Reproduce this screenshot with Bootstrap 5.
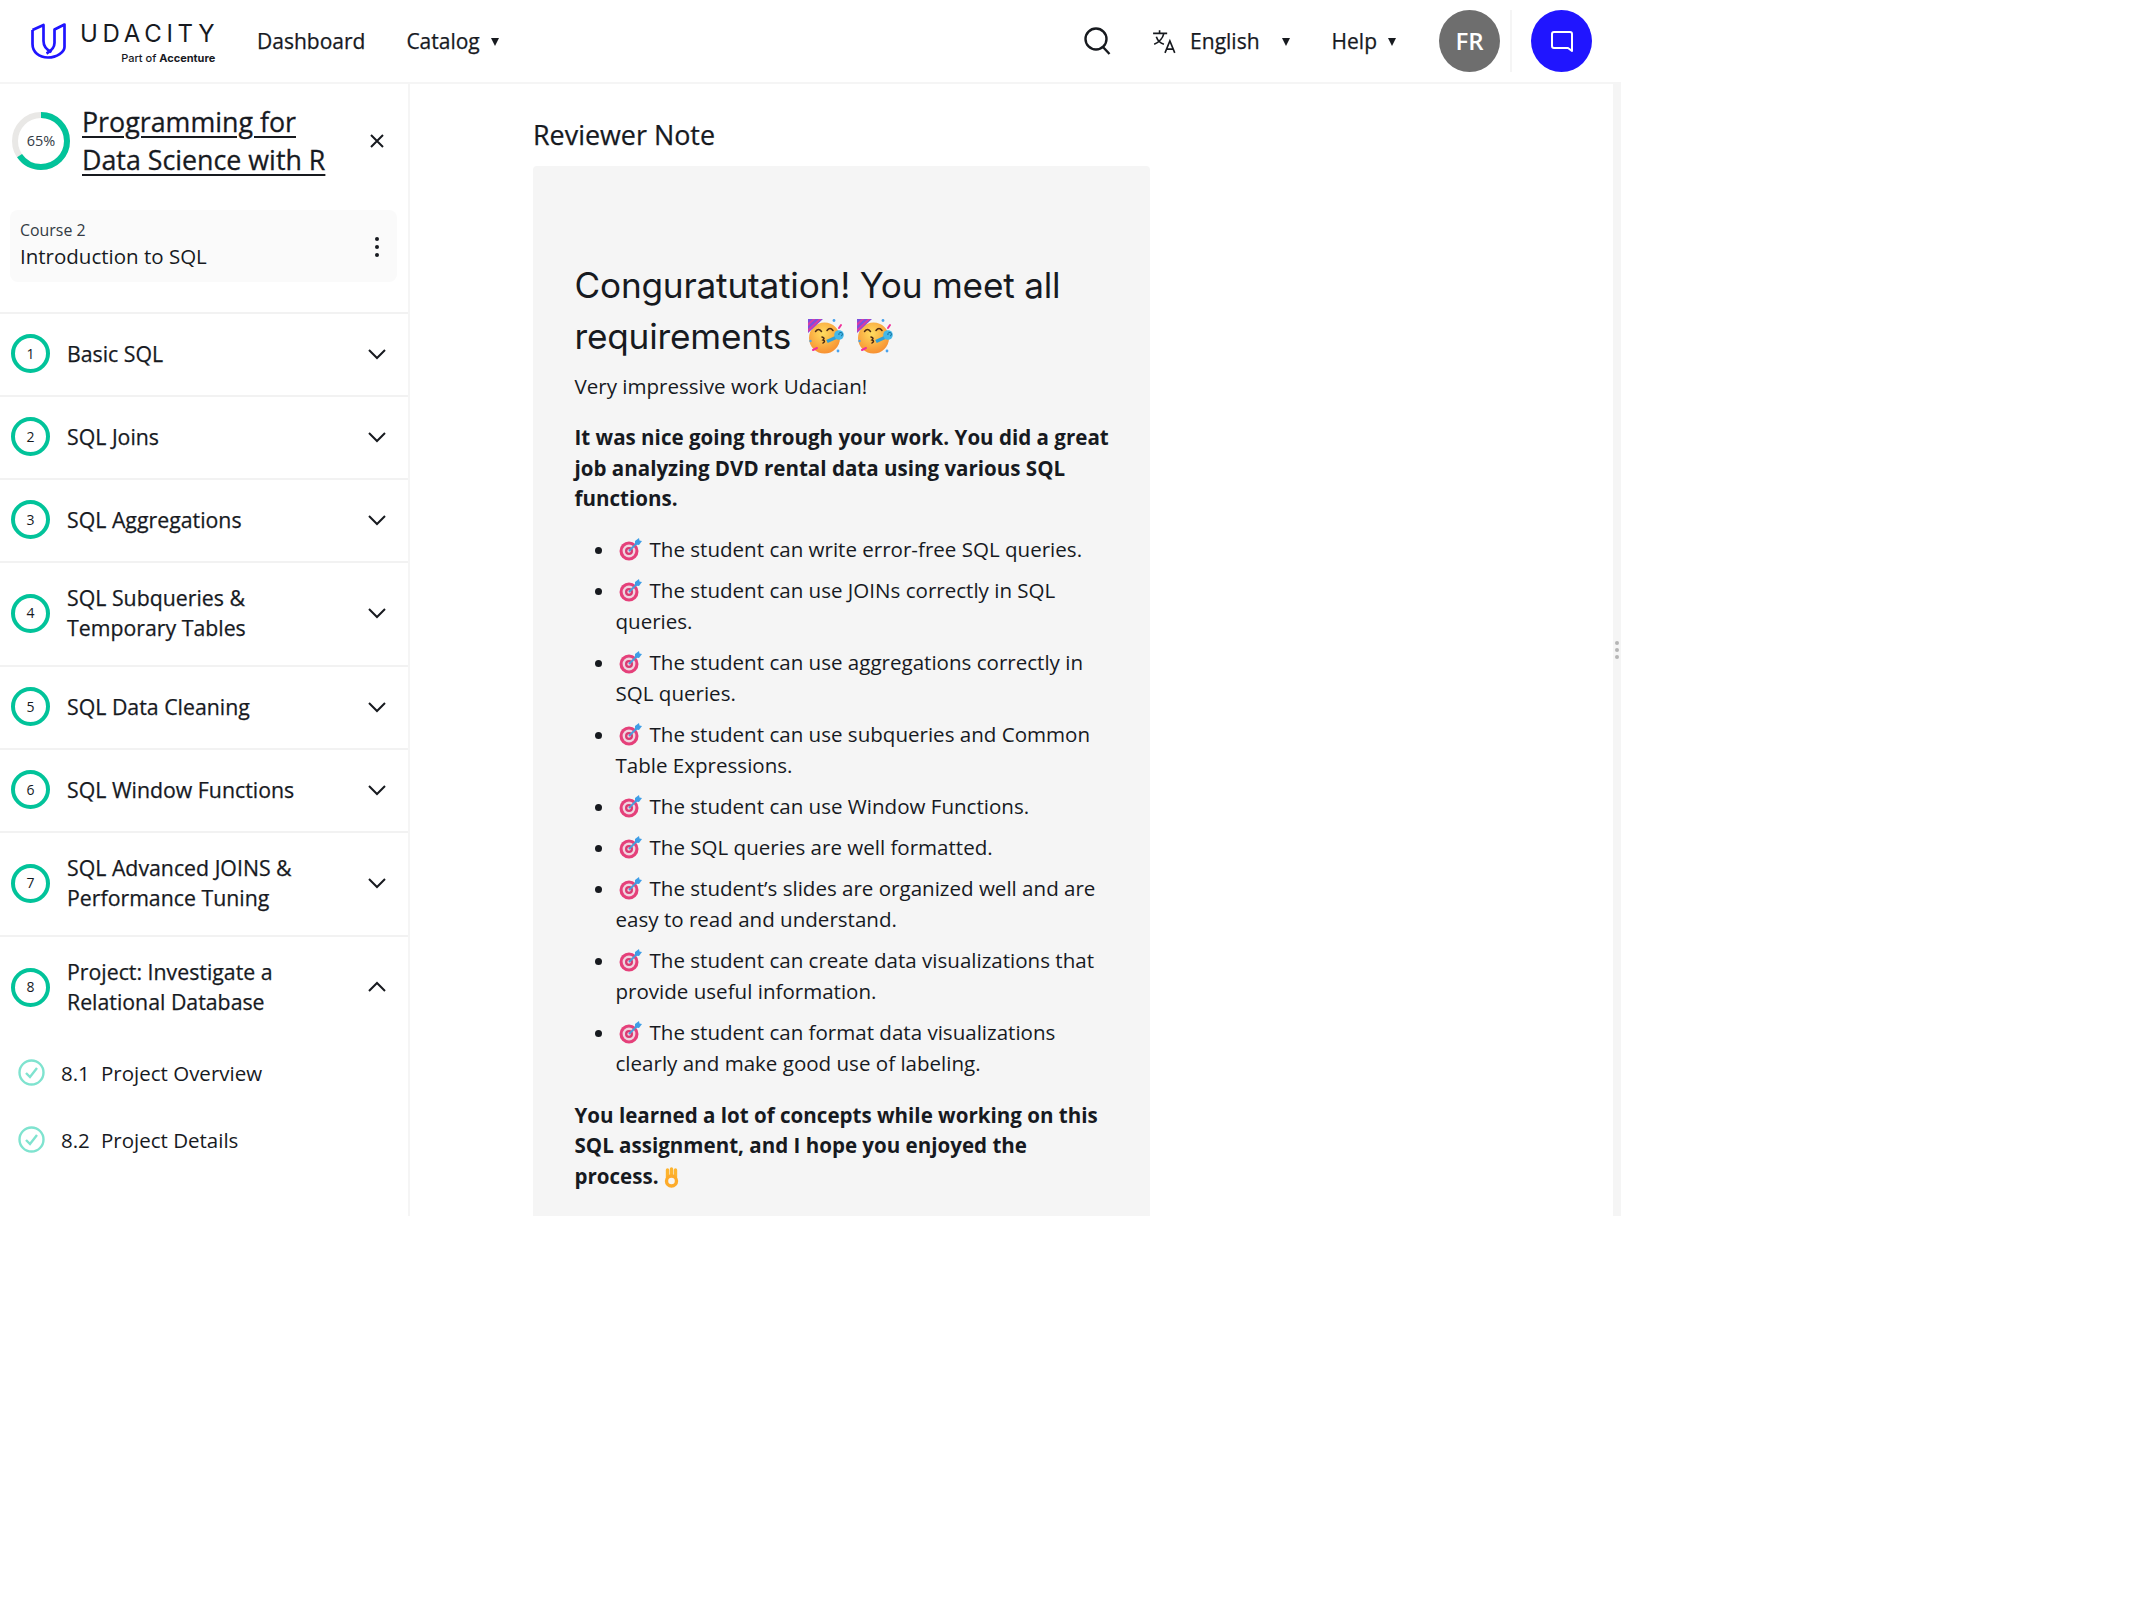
<!DOCTYPE html>
<html lang="en">
<head>
    <meta charset="utf-8">
    <title>Project Details</title>
    <link href="https://cdn.jsdelivr.net/npm/bootstrap@5.3.2/dist/css/bootstrap.min.css" rel="stylesheet">
    <style>
        body { font-family: "Open Sans", "Liberation Sans", sans-serif; color: #171a1f; background: #fff; }
        .app-shell { width: 1621px; height: 1216px; overflow: hidden; }

        /* top bar */
        .top-bar { height: 84px; padding: 0; border-bottom: 2px solid #f5f5f5; background: #fff; flex-wrap: nowrap; }
        .brand-link { width: 233px; padding-left: 31px; color: #171a1f; text-decoration: none; }
        .brand-logo { margin-right: 13px; }
        .brand-name { font-family: Inter, sans-serif; font-size: 24px; line-height: 24px; letter-spacing: 4.7px; font-weight: 400; margin: 3px -4px 0 0; }
        .brand-sub { font-family: Inter, sans-serif; font-size: 11px; line-height: 12px; text-align: right; margin-top: 6px; font-weight: 500; }
        .top-link { font-size: 21px; line-height: 30px; font-weight: 500; color: #171a1f; text-decoration: none; -webkit-text-stroke: .25px #171a1f; }
        .top-link.dropdown-toggle::after { border-top: 8px solid #171a1f; border-left: 4.5px solid transparent; border-right: 4.5px solid transparent; border-bottom: 0; vertical-align: 3px; }
        .catalog-link { margin-left: 41px; }
        .catalog-link::after { margin-left: 11px; }
        .lang-link::after { margin-left: 22px; }
        .help-link { margin-left: 42px; }
        .help-link::after { margin-left: 11px; }
        .search-mark { margin-right: 41px; }
        .round-btn { width: 61px; height: 62px; border-radius: 50%; border: 0; color: #fff; padding: 0; }
        .avatar-btn { background: #6e6e6e; font-size: 24px; font-weight: 600; margin-left: 43px; }
        .chat-btn { background: #2015ff; margin-right: 29px; }
        .bar-divider { width: 2px; height: 62px; background: #f5f5f5; margin: 0 19px 0 10px; }

        /* sidebar */
        .side-panel { width: 410px; flex: none; border-right: 2px solid #f5f5f5; }
        .course-head { padding: 0 23px 0 12px; height: 114px; margin-bottom: 12px; }
        .course-title { font-size: 26.8px; line-height: 38px; font-weight: 500; color: #171a1f; margin-left: 12px; width: 270px; text-decoration: underline; text-underline-offset: 4px; -webkit-text-stroke: .3px #171a1f; }
        .course-box { margin: 0 11px 0 10px; height: 72px; background: #fafafa; border-radius: 8px; padding: 10px 14px 0 10px; }
        .course-no { font-size: 15.9px; line-height: 20px; color: #333a44; }
        .course-name { font-size: 20.5px; line-height: 32px; }
        .more-dot { width: 4px; height: 4px; border-radius: 50%; background: #171a1f; }
        .module-list { margin-top: 30px; }
        .module-list .module-row { display: flex; align-items: center; padding: 0 21px 2px 11px; border-style: solid; border-color: #f2f2f2; border-width: 2px 0 0; border-radius: 0; height: 83px; color: #171a1f; font-size: 21.3px; line-height: 30px; font-weight: 500; -webkit-text-stroke: .25px #171a1f; }
        .module-list .module-row.tall { height: 104px; }
        .step-ring { width: 39px; height: 39px; flex: none; border: 4.5px solid #02c39a; border-radius: 50%; display: flex; align-items: center; justify-content: center; font-size: 14px; font-weight: 500; margin-right: 17px; -webkit-text-stroke: 0; }
        .module-name { flex-grow: 1; }
        .lesson-row { display: flex; align-items: center; height: 67px; padding-left: 18px; font-size: 20.5px; line-height: 30px; }
        .lesson-no { margin: 0 12px 0 16px; width: 28px; flex: none; }

        /* review */
        .review-pane { flex-grow: 1; padding: 31px 0 0 123px; display: flex; flex-direction: column; }
        .review-label { font-size: 26.9px; line-height: 40px; font-weight: 500; margin: 0 0 11px; -webkit-text-stroke: .25px #171a1f; }
        .review-box { width: 617px; flex-grow: 1; background: #f5f5f5; border-radius: 4px 4px 0 0; padding: 94px 38px 0 41.5px; font-size: 20.55px; line-height: 30.8px; }
        .review-box h2 { font-family: Inter, sans-serif; font-size: 35.2px; line-height: 51px; font-weight: 400; margin: 0 0 9px; letter-spacing: -.2px; }
        .review-box p { margin-bottom: 20px; }
        .review-box ul { padding-left: 41px; margin-bottom: 21px; }
        .review-box li { margin-bottom: 10.3px; }
        .emo-big { width: 37px; height: 36px; vertical-align: -6px; margin-left: 7px; }
        .emo-big.emo-next { margin-left: 2px; }
        .emo-target { width: 23px; height: 23px; vertical-align: -4px; margin: 0 8px 0 3px; }
        .emo-ok { width: 15px; height: 21px; vertical-align: -4px; }
        .side-strip { width: 8px; flex: none; background: #f5f5f5; gap: 3px; }
        .grip-dot { width: 4px; height: 4px; border-radius: 50%; background: #b5b5b5; }
    </style>
</head>
<body>
    <svg width="0" height="0" class="d-block">
        <defs>
            <radialGradient id="faceFill" cx="45%" cy="35%" r="70%">
                <stop offset="0" stop-color="#ffdc5e"/>
                <stop offset="1" stop-color="#f78b2e"/>
            </radialGradient>
            <symbol id="partyFace" viewBox="0 0 37 36">
                <circle cx="16.500" cy="19" r="15.500" fill="url(#faceFill)"/>
                <path d="M0 0h15L0 14z" fill="#7b4fdc"/>
                <path d="M0 4L5 0h2.500L0 7zM0 10L11 0h2.500L0 13z" fill="#d83aa8"/>
                <path d="M7.500 12.500q3-4 6 0M19 11.500q3-4 6 0" fill="none" stroke="#4e2b12" stroke-width="1.500" stroke-linecap="round"/>
                <path d="M14 18q3.500 1 1 3 3 1 0 3" fill="none" stroke="#4e2b12" stroke-width="1.500" stroke-linecap="round"/>
                <path d="M19 22.500l11-5" stroke="#2f9fd8" stroke-width="3.500"/>
                <circle cx="31" cy="16" r="4.800" fill="#45b8e8"/>
                <path d="M31 16a1.800 1.800 0 1 1 2 1" fill="none" stroke="#17709e" stroke-width="1"/>
                <path d="M31 9l2-3" stroke="#f0309a" stroke-width="2" stroke-linecap="round"/>
                <path d="M5 31l4-2" stroke="#f0309a" stroke-width="2" stroke-linecap="round"/>
                <circle cx="26" cy="1.500" r="1.400" fill="#4aa3ee"/><circle cx="30" cy="32" r="1.400" fill="#4aa3ee"/><circle cx="2.500" cy="22" r="1.200" fill="#4aa3ee"/>
            </symbol>
            <symbol id="targetMark" viewBox="0 0 23 23">
                <circle cx="10" cy="13" r="9.500" fill="#e5407a"/>
                <circle cx="10" cy="13" r="6.400" fill="#f0d5e0"/>
                <circle cx="10" cy="13" r="4" fill="#d93a72"/>
                <circle cx="10" cy="13" r="1.700" fill="#f0d5e0"/>
                <path d="M10 13L20 3" stroke="#4b9bd8" stroke-width="1.800"/>
                <path d="M16 3l4-3 .5 2.500L23 3l-3 4-4-.5z" fill="#3f9ee6"/>
            </symbol>
            <symbol id="okHand" viewBox="0 0 15 21">
                <path d="M3.500 3v7M7.500 2v6M11.500 3v7" stroke="#fdb42e" stroke-width="3.400" stroke-linecap="round"/>
                <circle cx="7.500" cy="14" r="5" fill="#f5f5f5" stroke="#fdab2a" stroke-width="3.400"/>
            </symbol>
            <symbol id="chevDown" viewBox="0 0 20 12">
                <path d="M2 2l8 8 8-8" fill="none" stroke="#171a1f" stroke-width="2"/>
            </symbol>
            <symbol id="doneMark" viewBox="0 0 27 27">
                <circle cx="13.500" cy="13.500" r="12" fill="none" stroke="#7fe3cf" stroke-width="2.400"/>
                <path d="M8 14l4 4 7-9" fill="none" stroke="#7fe3cf" stroke-width="2.400"/>
            </symbol>
        </defs>
    </svg>

    <div class="app-shell d-flex flex-column">
        <nav class="navbar top-bar">
            <a class="brand-link d-flex align-items-center" href="#">
                <svg width="36" height="36" viewBox="0 0 36 36" class="flex-shrink-0 brand-logo" fill="none" stroke="#2015ff" stroke-width="2.700" stroke-linejoin="round">
                    <path d="M1.500 7L12.500 2V18C12.500 23 16 27 20.500 29"/>
                    <path d="M1.500 7V21C1.500 29 8 34.500 17 34.500C26 34.500 33.500 29 33.500 24V1.500L23.500 6.500V20C23.500 25 20 28 15.500 30.500"/>
                </svg>
                <div>
                    <div class="brand-name">UDACITY</div>
                    <div class="brand-sub">Part of <b>Accenture</b></div>
                </div>
            </a>
            <a class="top-link ms-4" href="#">Dashboard</a>
            <a class="top-link catalog-link dropdown-toggle" href="#">Catalog</a>
            <div class="ms-auto d-flex align-items-center">
                <svg width="27" height="28" viewBox="0 0 27 28" fill="none" stroke="#171a1f" stroke-width="2.400" class="search-mark">
                    <circle cx="12" cy="12" r="10.500"/><path d="M19 20l6.500 7"/>
                </svg>
                <svg width="26" height="26" viewBox="0 0 24 24" fill="none" stroke="#171a1f" stroke-width="1.500" class="me-2">
                    <path d="M1 5h13M7 2v3M11 5c-1 4-4 8-9 10M4 8c1 3 4 6 7 7M12 23l4.500-11L21 23M13.500 19.500h6"/>
                </svg>
                <a class="top-link lang-link dropdown-toggle ms-1" href="#">English</a>
                <a class="top-link help-link dropdown-toggle" href="#">Help</a>
                <button class="round-btn avatar-btn" type="button">FR</button>
                <span class="bar-divider"></span>
                <button class="round-btn chat-btn" type="button">
                    <svg width="24" height="24" viewBox="0 0 24 24" fill="none" stroke="#fff" stroke-width="2" stroke-linejoin="round">
                        <path d="M4 2h16a2 2 0 0 1 2 2v17l-4-3H4a2 2 0 0 1-2-2V4a2 2 0 0 1 2-2z"/>
                    </svg>
                </button>
            </div>
        </nav>

        <div class="d-flex flex-grow-1 overflow-hidden">
            <aside class="side-panel">
                <div class="course-head d-flex align-items-center">
                    <svg width="58" height="58" viewBox="0 0 58 58" class="flex-shrink-0">
                        <circle cx="29" cy="29" r="26" fill="none" stroke="#e9e8e6" stroke-width="6"/>
                        <circle cx="29" cy="29" r="26" fill="none" stroke="#02c39a" stroke-width="6" stroke-dasharray="106.200 163.400" transform="rotate(-90 29 29)"/>
                        <text x="29" y="34" text-anchor="middle" font-size="14.500" fill="#333a44" font-family="Open Sans">65%</text>
                    </svg>
                    <a class="course-title" href="#">Programming for Data Science with R</a>
                    <svg width="16" height="16" viewBox="0 0 16 16" class="ms-auto flex-shrink-0" fill="none" stroke="#171a1f" stroke-width="2">
                        <path d="M2 2l12 12M14 2L2 14"/>
                    </svg>
                </div>
                <div class="course-box d-flex justify-content-between">
                    <div>
                        <div class="course-no">Course 2</div>
                        <div class="course-name">Introduction to SQL</div>
                    </div>
                    <div class="d-flex flex-column gap-1 justify-content-center pb-2 me-1">
                        <span class="more-dot"></span><span class="more-dot"></span><span class="more-dot"></span>
                    </div>
                </div>

                <div class="list-group list-group-flush module-list">
                    <div class="list-group-item module-row"><span class="step-ring">1</span><span class="module-name">Basic SQL</span><svg width="20" height="12"><use href="#chevDown"/></svg></div>
                    <div class="list-group-item module-row"><span class="step-ring">2</span><span class="module-name">SQL Joins</span><svg width="20" height="12"><use href="#chevDown"/></svg></div>
                    <div class="list-group-item module-row"><span class="step-ring">3</span><span class="module-name">SQL Aggregations</span><svg width="20" height="12"><use href="#chevDown"/></svg></div>
                    <div class="list-group-item module-row tall"><span class="step-ring">4</span><span class="module-name">SQL Subqueries &amp;<br>Temporary Tables</span><svg width="20" height="12"><use href="#chevDown"/></svg></div>
                    <div class="list-group-item module-row"><span class="step-ring">5</span><span class="module-name">SQL Data Cleaning</span><svg width="20" height="12"><use href="#chevDown"/></svg></div>
                    <div class="list-group-item module-row"><span class="step-ring">6</span><span class="module-name">SQL Window Functions</span><svg width="20" height="12"><use href="#chevDown"/></svg></div>
                    <div class="list-group-item module-row tall"><span class="step-ring">7</span><span class="module-name">SQL Advanced JOINS &amp;<br>Performance Tuning</span><svg width="20" height="12"><use href="#chevDown"/></svg></div>
                    <div class="list-group-item module-row tall"><span class="step-ring">8</span><span class="module-name">Project: Investigate a<br>Relational Database</span><svg width="20" height="12" transform="rotate(180)"><use href="#chevDown"/></svg></div>
                </div>
                <div class="lesson-row"><svg width="27" height="27" class="flex-shrink-0"><use href="#doneMark"/></svg><span class="lesson-no">8.1</span><span>Project Overview</span></div>
                <div class="lesson-row"><svg width="27" height="27" class="flex-shrink-0"><use href="#doneMark"/></svg><span class="lesson-no">8.2</span><span>Project Details</span></div>
            </aside>

            <main class="review-pane">
                <h1 class="review-label">Reviewer Note</h1>
                <div class="review-box">
                    <h2>Conguratutation! You meet all requirements <svg class="emo-big"><use href="#partyFace"/></svg> <svg class="emo-big emo-next"><use href="#partyFace"/></svg></h2>
                    <p>Very impressive work Udacian!</p>
                    <p><strong>It was nice going through your work. You did a great job analyzing DVD rental data using various SQL functions.</strong></p>
                    <ul>
                        <li><svg class="emo-target"><use href="#targetMark"/></svg>The student can write error-free SQL queries.</li>
                        <li><svg class="emo-target"><use href="#targetMark"/></svg>The student can use JOINs correctly in SQL queries.</li>
                        <li><svg class="emo-target"><use href="#targetMark"/></svg>The student can use aggregations correctly in SQL queries.</li>
                        <li><svg class="emo-target"><use href="#targetMark"/></svg>The student can use subqueries and Common Table Expressions.</li>
                        <li><svg class="emo-target"><use href="#targetMark"/></svg>The student can use Window Functions.</li>
                        <li><svg class="emo-target"><use href="#targetMark"/></svg>The SQL queries are well formatted.</li>
                        <li><svg class="emo-target"><use href="#targetMark"/></svg>The student’s slides are organized well and are easy to read and understand.</li>
                        <li><svg class="emo-target"><use href="#targetMark"/></svg>The student can create data visualizations that provide useful information.</li>
                        <li><svg class="emo-target"><use href="#targetMark"/></svg>The student can format data visualizations clearly and make good use of labeling.</li>
                    </ul>
                    <p><strong>You learned a lot of concepts while working on this SQL assignment, and I hope you enjoyed the process. <svg class="emo-ok"><use href="#okHand"/></svg></strong></p>
                </div>
            </main>

            <div class="side-strip d-flex flex-column justify-content-center align-items-center">
                <span class="grip-dot"></span><span class="grip-dot"></span><span class="grip-dot"></span>
            </div>
        </div>
    </div>

    <script src="https://cdn.jsdelivr.net/npm/bootstrap@5.3.2/dist/js/bootstrap.bundle.min.js"></script>
</body>
</html>
